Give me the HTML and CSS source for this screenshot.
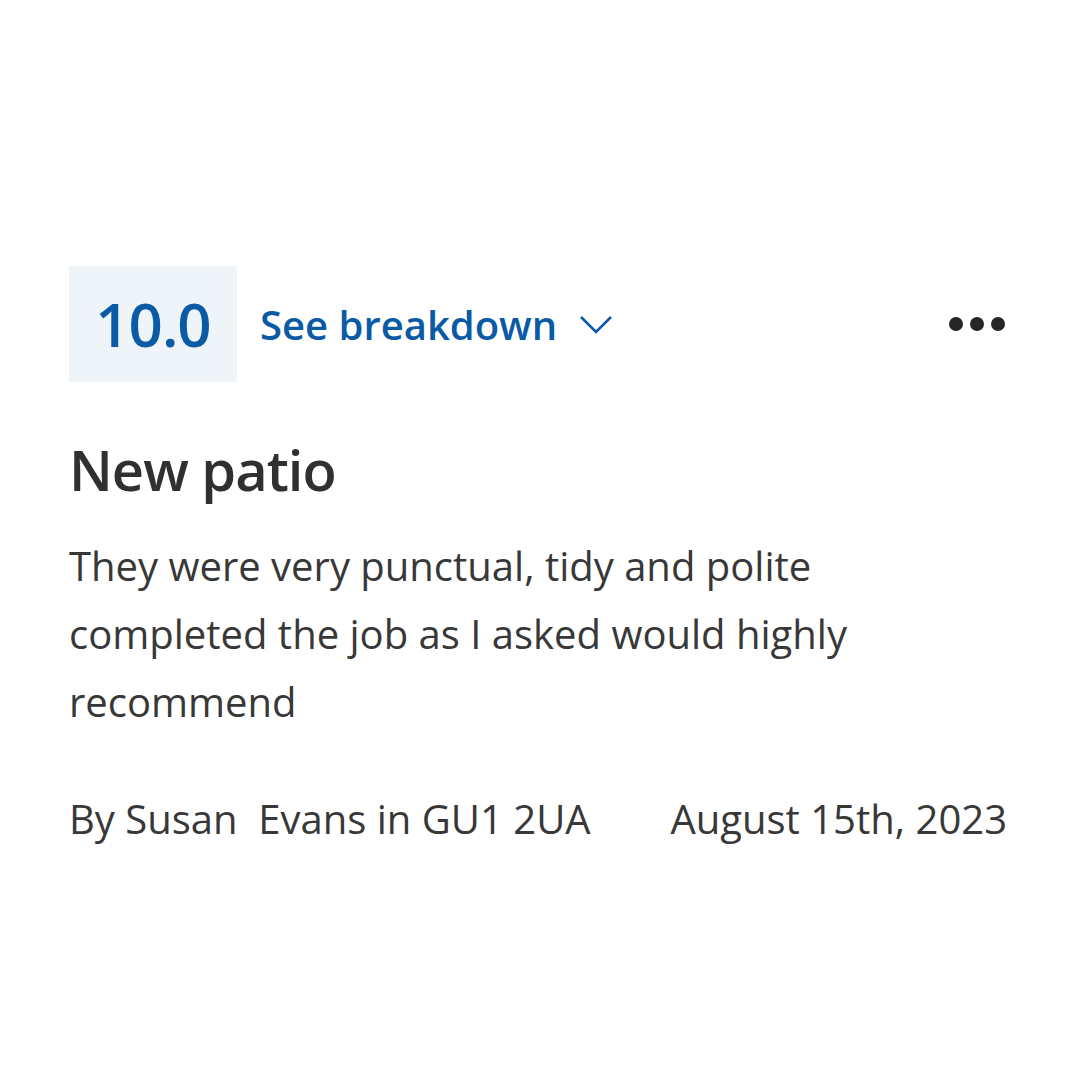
FILE: index.html
```html
<!DOCTYPE html>
<html lang="en">
<head>
<meta charset="utf-8">
<title>Review</title>
<link rel="stylesheet" href="styles.css">
</head>
<body>
<div class="review">
  <div class="top">
    <div class="score">10.0</div>
    <div class="breakdown">
      <span>See breakdown</span>
      <svg class="chev" width="34" height="22" viewBox="0 0 34 22"><path d="M2 3 L17 18 L32 3" fill="none" stroke="#0a5aa6" stroke-width="2.6"/></svg>
    </div>
    <div class="more">
      <svg width="56" height="16" viewBox="0 0 56 16"><circle cx="7" cy="8" r="7" fill="#262626"/><circle cx="28" cy="8" r="7" fill="#262626"/><circle cx="49" cy="8" r="7" fill="#262626"/></svg>
    </div>
  </div>
  <h2 class="title">New patio</h2>
  <p class="body">They were very punctual, tidy and polite completed the job as I asked would highly recommend</p>
  <div class="meta">
    <span>By Susan&nbsp; Evans in GU1 2UA</span>
    <span>August 15th, 2023</span>
  </div>
</div>
</body>
</html>
```

FILE: styles.css
```css
html, body {
  margin: 0;
  padding: 0;
  background: #ffffff;
}
body {
  font-family: "Open Sans", "Liberation Sans", sans-serif;
  color: #333333;
}
.review {
  width: 938px;
  margin-left: 69px;
  padding-top: 266px;
}
.top {
  display: flex;
  align-items: center;
  height: 116px;
}
.score {
  background: #eff4f9;
  color: #0a5aa6;
  font-size: 60px;
  font-weight: 600;
  letter-spacing: -1px;
  height: 116px;
  width: 168px;
  display: flex;
  align-items: center;
  justify-content: center;
  box-sizing: border-box;
  padding-left: 0;
}
.breakdown {
  margin-left: 23px;
  display: flex;
  align-items: center;
  gap: 22px;
  color: #0a5aa6;
  font-size: 40px;
  font-weight: 600;
}
.chev {
  display: block;
  margin-top: 2px;
}
.more {
  margin-left: auto;
  margin-right: 2px;
  display: flex;
}
.more svg { display: block; }
.title {
  margin: 52px 0 0 0;
  font-size: 56px;
  font-weight: 600;
  letter-spacing: -1px;
  line-height: 70px;
  color: #303030;
}
.body {
  margin: 28px 0 0 0;
  font-size: 40px;
  line-height: 68px;
  width: 840px;
  color: #383838;
}
.meta {
  margin-top: 58px;
  display: flex;
  justify-content: space-between;
  font-size: 40px;
  line-height: 50px;
  color: #383838;
}
```
